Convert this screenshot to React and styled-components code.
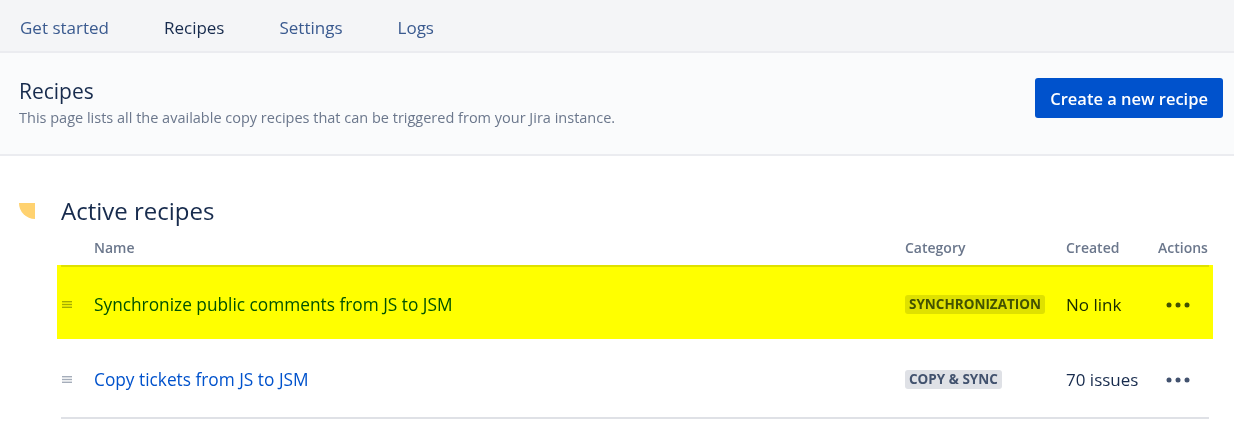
import React from "react";
import styled, { createGlobalStyle } from "styled-components";

const GlobalStyle = createGlobalStyle`
  html, body { margin: 0; padding: 0; background: #ffffff; }
  body {
    font-family: "Open Sans", "Noto Sans", "Liberation Sans", sans-serif;
    color: #172b4d;
    -webkit-font-smoothing: antialiased;
  }
  * { box-sizing: border-box; }
`;

const Nav = styled.nav`
  display: flex;
  align-items: center;
  gap: 55px;
  height: 53px;
  padding: 4px 0 0 20px;
  background: #f4f5f7;
  border-bottom: 2px solid #ebecf0;
`;

const NavItem = styled.a`
  font-size: 17px;
  line-height: 24px;
  color: ${(p) => (p.$active ? "#172b4d" : "#3a5a8f")};
  text-decoration: none;
  cursor: pointer;
`;

const PageHeader = styled.header`
  display: flex;
  justify-content: space-between;
  align-items: flex-start;
  padding: 24px 11px 26px 19px;
  background: #fafbfc;
  border-bottom: 2px solid #ebecf0;
`;

const TitleBlock = styled.div`
  display: flex;
  flex-direction: column;
`;

const PageTitle = styled.h1`
  margin: 0;
  font-size: 21px;
  line-height: 28px;
  font-weight: 500;
  color: #172b4d;
`;

const Subtitle = styled.p`
  margin: 3px 0 0;
  font-size: 14.5px;
  line-height: 20px;
  color: #6b778c;
`;

const PrimaryButton = styled.button`
  margin-top: 1px;
  height: 40px;
  padding: 0 15px;
  border: none;
  border-radius: 3px;
  background: #0052cc;
  color: #ffffff;
  font-family: inherit;
  font-size: 16.5px;
  font-weight: 600;
  cursor: pointer;
`;

const Section = styled.section`
  padding: 39px 25px 0 19px;
`;

const SectionTitleRow = styled.div`
  display: flex;
  align-items: center;
  gap: 26px;
`;

const QuarterIcon = styled.span`
  width: 16px;
  height: 16px;
  background: #ffd270;
  border-radius: 0 0 0 100%;
`;

const SectionTitle = styled.h2`
  margin: 0;
  font-size: 24px;
  line-height: 32px;
  font-weight: 400;
  color: #172b4d;
`;

const Table = styled.div`
  margin-left: 42px;
  border-bottom: 2px solid #dfe1e6;
`;

const cols = "33px 1fr 161px 92px 51px";

const HeaderRow = styled.div`
  display: grid;
  grid-template-columns: ${cols};
  padding: 8px 0 4px;
  border-bottom: 2px solid #dfe1e6;
`;

const HeaderCell = styled.div`
  font-size: 14px;
  line-height: 26px;
  font-weight: 600;
  color: #6b778c;
`;

const Row = styled.div`
  position: relative;
  display: grid;
  grid-template-columns: ${cols};
  align-items: center;
  height: 75px;
`;

const Highlight = styled.span`
  position: absolute;
  top: -2px;
  bottom: 3px;
  left: -4px;
  right: -4px;
  background: #ffff00;
  mix-blend-mode: multiply;
  pointer-events: none;
`;

const DragCell = styled.div`
  display: flex;
  align-items: center;
  padding-left: 1px;
`;

const NameLink = styled.a`
  font-size: 17.3px;
  line-height: 24px;
  color: #0052cc;
  text-decoration: none;
  cursor: pointer;
`;

const Badge = styled.span`
  justify-self: start;
  display: inline-block;
  padding: 0 4px;
  border-radius: 3px;
  background: #dfe1e6;
  color: #42526e;
  font-size: 13.5px;
  line-height: 19px;
  font-weight: 700;
  text-transform: uppercase;
`;

const CreatedCell = styled.div`
  font-size: 17px;
  line-height: 24px;
  color: #172b4d;
`;

const ActionsCell = styled.div`
  display: flex;
  align-items: center;
  padding-left: 8px;
`;

const DragHandle = () => (
  <svg width="10" height="7" viewBox="0 0 10 7">
    <rect x="0" y="0" width="10" height="1.4" fill="#a5adba" />
    <rect x="0" y="2.8" width="10" height="1.4" fill="#a5adba" />
    <rect x="0" y="5.6" width="10" height="1.4" fill="#a5adba" />
  </svg>
);

const Dots = () => (
  <svg width="24" height="6" viewBox="0 0 24 6">
    <circle cx="3" cy="3" r="2.5" fill="#42526e" />
    <circle cx="12" cy="3" r="2.5" fill="#42526e" />
    <circle cx="21" cy="3" r="2.5" fill="#42526e" />
  </svg>
);

const recipes = [
  { name: "Synchronize public comments from JS to JSM", category: "Synchronization", created: "No link", highlighted: true },
  { name: "Copy tickets from JS to JSM", category: "Copy & Sync", created: "70 issues" },
];

export default function App() {
  return (
    <>
      <GlobalStyle />
      <Nav>
        <NavItem>Get started</NavItem>
        <NavItem $active>Recipes</NavItem>
        <NavItem>Settings</NavItem>
        <NavItem>Logs</NavItem>
      </Nav>
      <PageHeader>
        <TitleBlock>
          <PageTitle>Recipes</PageTitle>
          <Subtitle>This page lists all the available copy recipes that can be triggered from your Jira instance.</Subtitle>
        </TitleBlock>
        <PrimaryButton>Create a new recipe</PrimaryButton>
      </PageHeader>
      <Section>
        <SectionTitleRow>
          <QuarterIcon />
          <SectionTitle>Active recipes</SectionTitle>
        </SectionTitleRow>
        <Table>
          <HeaderRow>
            <HeaderCell />
            <HeaderCell>Name</HeaderCell>
            <HeaderCell>Category</HeaderCell>
            <HeaderCell>Created</HeaderCell>
            <HeaderCell>Actions</HeaderCell>
          </HeaderRow>
          {recipes.map((r) => (
            <Row key={r.name}>
              <DragCell><DragHandle /></DragCell>
              <NameLink>{r.name}</NameLink>
              <Badge>{r.category}</Badge>
              <CreatedCell>{r.created}</CreatedCell>
              <ActionsCell><Dots /></ActionsCell>
              {r.highlighted && <Highlight />}
            </Row>
          ))}
        </Table>
      </Section>
    </>
  );
}
